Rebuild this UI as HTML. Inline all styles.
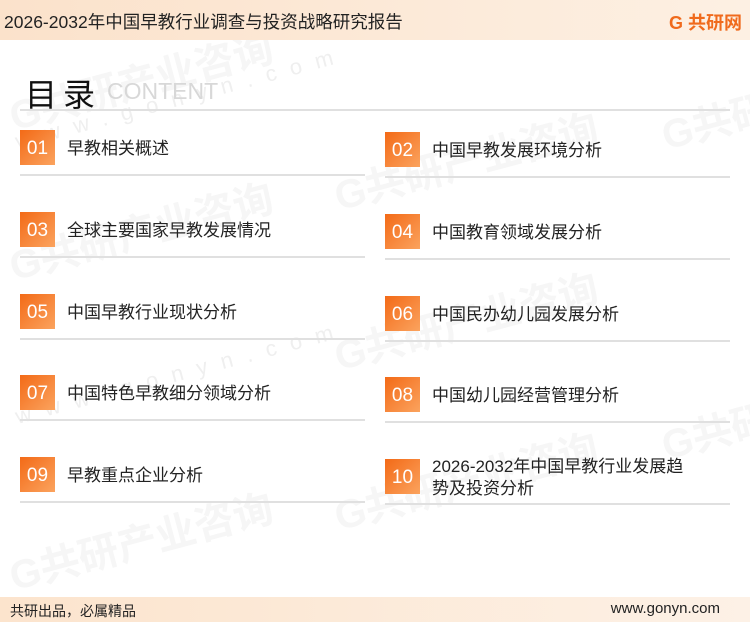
<!DOCTYPE html>
<html><head><meta charset="utf-8"><style>
*{margin:0;padding:0;box-sizing:border-box}
body{width:750px;height:622px;background:#fff;position:relative;overflow:hidden;font-family:"Liberation Sans","Noto Sans CJK SC",sans-serif;color:#222}
.hd{position:absolute;left:0;top:0;width:750px;height:40px;background:linear-gradient(90deg,#fbe2cb,#fdf0e3);}
.hd .t{position:absolute;left:4px;top:9px;font-size:17.5px;color:#222}
.logo{position:absolute;right:8px;top:9px;font-size:18px;font-weight:bold;color:#f06a1c}
.ft{position:absolute;left:0;top:597px;width:750px;height:25px;background:linear-gradient(90deg,#fce4cd,#fdf1e6)}
.ft .l{position:absolute;left:10px;top:4px;font-size:14px}
.ft .r{position:absolute;right:30px;top:3px;font-size:15px}
.mt{position:absolute;left:25px;top:70px;font-size:32px;color:#111;letter-spacing:6px}
.ct{position:absolute;left:107px;top:78px;font-size:23px;color:#d8d8d8}
.ln{position:absolute;height:2px;background:#e0e0e0}
.b{position:absolute;width:35px;height:35px;background:linear-gradient(135deg,#f36a17,#fba35e);color:#fff;font-size:19px;text-align:center;line-height:37px}
.x{position:absolute;font-size:17px;color:#222;line-height:22px}
.wm{position:absolute;font-size:40px;font-weight:bold;color:#f6f6f6;transform:rotate(-15deg);white-space:nowrap}
.wm2{position:absolute;font-size:22px;color:#efefef;transform:rotate(-15deg);letter-spacing:14px;white-space:nowrap}
</style></head><body>
<div class="wm" style="left:5px;top:50px">G共研产业咨询</div>
<div class="wm2" style="left:10px;top:85px">www.gonyn.com</div>
<div class="wm" style="left:330px;top:130px">G共研产业咨询</div>
<div class="wm" style="left:5px;top:200px">G共研产业咨询</div>
<div class="wm" style="left:330px;top:290px">G共研产业咨询</div>
<div class="wm2" style="left:10px;top:360px">www.gonyn.com</div>
<div class="wm" style="left:5px;top:510px">G共研产业咨询</div>
<div class="wm" style="left:330px;top:450px">G共研产业咨询</div>
<div class="wm" style="left:660px;top:90px">G共研</div>
<div class="wm" style="left:660px;top:400px">G共研</div>
<div class="hd"><div class="t">2026-2032年中国早教行业调查与投资战略研究报告</div><div class="logo">G 共研网</div></div>
<div class="mt">目录</div><div class="ct">CONTENT</div>
<div class="ln" style="left:20px;top:109px;width:710px"></div>

<div class="b" style="left:20px;top:130px">01</div><div class="x" style="left:67px;top:138px">早教相关概述</div><div class="ln" style="left:20px;top:174px;width:345px"></div>
<div class="b" style="left:385px;top:132px">02</div><div class="x" style="left:432px;top:140px">中国早教发展环境分析</div><div class="ln" style="left:385px;top:176px;width:345px"></div>

<div class="b" style="left:20px;top:212px">03</div><div class="x" style="left:67px;top:220px">全球主要国家早教发展情况</div><div class="ln" style="left:20px;top:256px;width:345px"></div>
<div class="b" style="left:385px;top:214px">04</div><div class="x" style="left:432px;top:222px">中国教育领域发展分析</div><div class="ln" style="left:385px;top:258px;width:345px"></div>

<div class="b" style="left:20px;top:294px">05</div><div class="x" style="left:67px;top:302px">中国早教行业现状分析</div><div class="ln" style="left:20px;top:338px;width:345px"></div>
<div class="b" style="left:385px;top:296px">06</div><div class="x" style="left:432px;top:304px">中国民办幼儿园发展分析</div><div class="ln" style="left:385px;top:340px;width:345px"></div>

<div class="b" style="left:20px;top:375px">07</div><div class="x" style="left:67px;top:383px">中国特色早教细分领域分析</div><div class="ln" style="left:20px;top:419px;width:345px"></div>
<div class="b" style="left:385px;top:377px">08</div><div class="x" style="left:432px;top:385px">中国幼儿园经营管理分析</div><div class="ln" style="left:385px;top:421px;width:345px"></div>

<div class="b" style="left:20px;top:457px">09</div><div class="x" style="left:67px;top:465px">早教重点企业分析</div><div class="ln" style="left:20px;top:501px;width:345px"></div>
<div class="b" style="left:385px;top:459px">10</div><div class="x" style="left:432px;top:456px">2026-2032年中国早教行业发展趋<br>势及投资分析</div><div class="ln" style="left:385px;top:503px;width:345px"></div>

<div class="ft"><div class="l">共研出品，必属精品</div><div class="r">www.gonyn.com</div></div>
</body></html>
